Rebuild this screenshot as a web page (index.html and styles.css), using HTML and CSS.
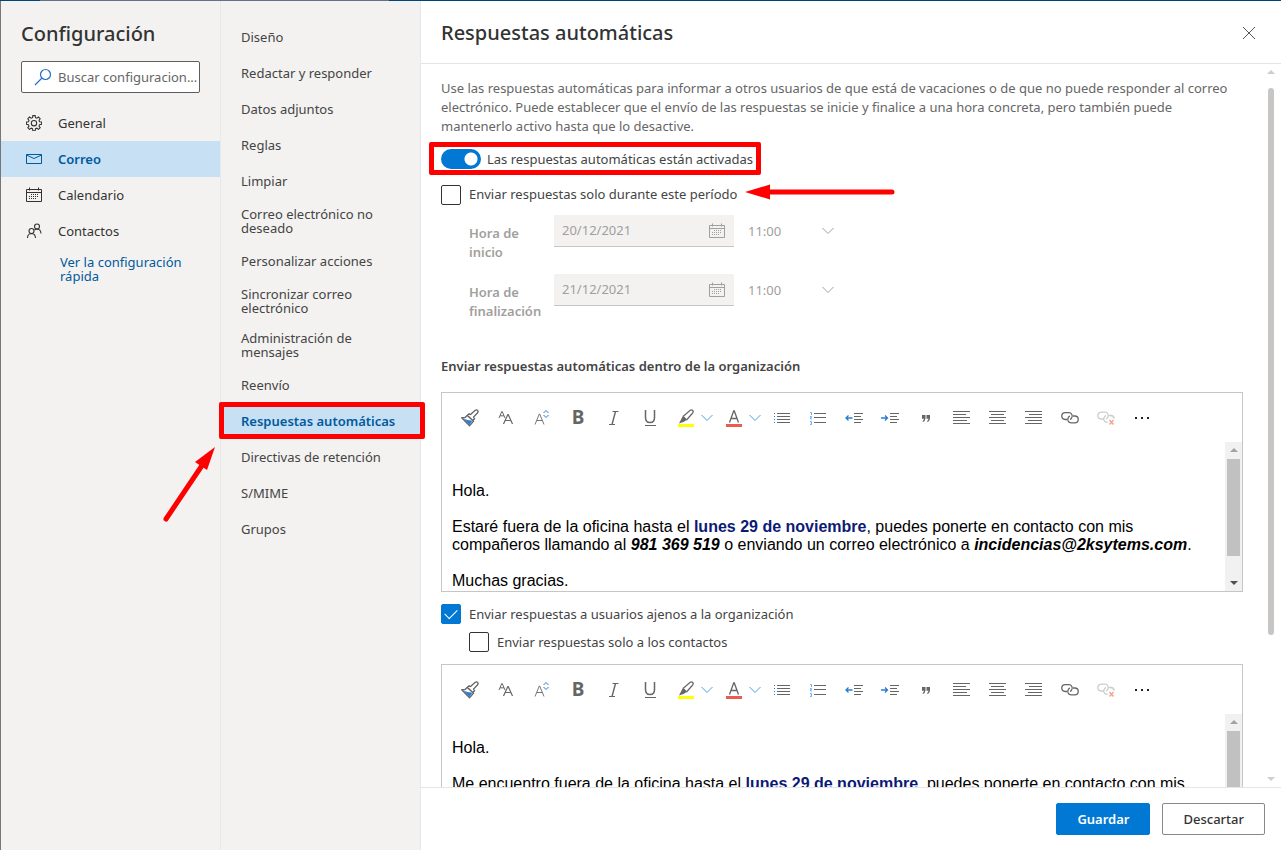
FILE: index.html
```html
<!DOCTYPE html>
<html lang="es">
<head>
<meta charset="utf-8">
<meta name="viewport" content="width=device-width, initial-scale=1">
<title>Configuración</title>
<link rel="stylesheet" href="styles.css">
</head>
<body>
<svg class="sprite" aria-hidden="true">
  <symbol id="i-calendar" viewBox="0 0 16 16">
    <path fill="none" stroke="currentColor" d="M.5 2.500h15v12H.5zM.5 5.500h15M3.500.5v3M12.500.5v3"/>
    <path fill="none" stroke="currentColor" stroke-dasharray="1 1" d="M5 7.500h8M3 9.500h10M3 11.500h8"/>
  </symbol>
  <symbol id="i-chevron" viewBox="0 0 12 8">
    <path fill="none" stroke="currentColor" d="M.5 1 6 6.500 11.500 1"/>
  </symbol>
  <symbol id="i-brush" viewBox="0 0 18 18">
    <path fill="#fff" stroke="#666" stroke-width="1.300" d="M9.500 5.500 14 1.500q1.500-1.200 2.600 0 1 1.200-.2 2.500L12.500 8l1 1.800-2 2-5.200-5.300 1.800-1.800z"/>
    <path fill="#fff" stroke="#666" stroke-width="1.300" d="M6.200 6.500 4 8.500l-3.300.3 7.800 8 4-4.500-1-1z"/>
    <path fill="#2b7cd3" d="M2.500 9.800q4 1.500 8.800 2L8.500 16z"/>
  </symbol>
  <symbol id="i-fontname" viewBox="0 0 16 16">
    <path fill="none" stroke="#666" d="M1 8 3.800 1.500h.4L7 8M2 5.800h4"/>
    <path fill="none" stroke="#666" stroke-width="1.200" d="M5.500 14 9.800 4.500h.4l4.300 9.500M7.200 10.500h5.600"/>
  </symbol>
  <symbol id="i-fontsize" viewBox="0 0 16 18">
    <path fill="none" stroke="#777" d="M1 15.500 5.300 5h.4L10 15.500M2.700 11.500h5.600"/>
    <path fill="none" stroke="#2b7cd3" d="M9.500 4 12 1.500 14.500 4M9.500 6 12 8.500 14.500 6"/>
  </symbol>
  <symbol id="i-italic" viewBox="0 0 16 16">
    <path fill="none" stroke="#666" d="M6.500 1.500h6M3 14.500h6"/>
    <path fill="none" stroke="#666" stroke-width="1.400" d="M9.500 1.500 6 14.500"/>
  </symbol>
  <symbol id="i-underline" viewBox="0 0 16 18">
    <path fill="none" stroke="#666" stroke-width="1.500" d="M3.500 1v7.500q0 5 4.500 5t4.500-5V1"/>
    <path fill="none" stroke="#666" d="M3 16.500h11"/>
  </symbol>
  <symbol id="i-marker" viewBox="0 0 16 18">
    <path fill="#ff0" d="M0 15h16v3H0z"/>
    <path fill="none" stroke="#666" stroke-width="1.200" d="M5 7.500 12.200 1.300q1.400-.9 2.500.2 1 1.200 0 2.500L8.500 11"/>
    <path fill="none" stroke="#666" stroke-width="1.200" d="M5 7.500 8.500 11"/>
    <path fill="#666" d="M4.500 7.500q2.800.8 4 3.500l-3 2L1 14.500z"/>
  </symbol>
  <symbol id="i-color" viewBox="0 0 16 18">
    <path fill="#ea5b52" d="M0 15h16v3H0z"/>
    <path fill="none" stroke="#666" stroke-width="1.300" d="M3.500 13.500 7.700 2h.6l4.200 11.500M5 9.500h6"/>
  </symbol>
  <symbol id="i-bullets" viewBox="0 0 16 16">
    <path fill="none" stroke="#666" d="M3 3.500h13M3 6.500h13M3 9.500h13M3 12.500h13"/>
    <path stroke="#2b7cd3" d="M0 3.500h1M0 6.500h1M0 9.500h1M0 12.500h1"/>
  </symbol>
  <symbol id="i-numbers" viewBox="0 0 16 16">
    <path fill="none" stroke="#666" d="M4 3.500h12M4 7.500h12M4 12.500h12"/>
    <path fill="none" stroke="#79b0ea" d="M0 2.500h1.500V5M0 6.500h1.500v1H.5V9H2M0 11.500h1.500v3H0M.5 13h1"/>
  </symbol>
  <symbol id="i-outdent" viewBox="0 0 18 16">
    <path fill="none" stroke="#666" d="M9 3.500h9M9 6.500h7M9 9.500h9M9 12.500h7"/>
    <path fill="none" stroke="#2b7cd3" stroke-width="1.300" d="M7.500 8H1M3.500 5.500 1 8l2.500 2.500"/>
  </symbol>
  <symbol id="i-indent" viewBox="0 0 18 16">
    <path fill="none" stroke="#666" d="M9 3.500h9M9 6.500h7M9 9.500h9M9 12.500h7"/>
    <path fill="none" stroke="#2b7cd3" stroke-width="1.300" d="M0 8h6.500M4 5.500 6.500 8 4 10.500"/>
  </symbol>
  <symbol id="i-quote" viewBox="0 0 10 16">
    <path fill="#666" d="M1 5h3.500v3.500Q4.300 11 2 12l-.5-.8Q2.900 10.300 3 8.800H1zM5.500 5H9v3.500Q8.800 11 6.500 12L6 11.200Q7.400 10.300 7.500 8.800h-2z"/>
  </symbol>
  <symbol id="i-left" viewBox="0 0 18 16">
    <path fill="none" stroke="#666" d="M0 1.500h17M0 4.500h13M0 7.500h17M0 10.500h14M0 13.500h17"/>
  </symbol>
  <symbol id="i-center" viewBox="0 0 18 16">
    <path fill="none" stroke="#666" d="M0 1.500h17M2 4.500h13M0 7.500h17M2 10.500h13M0 13.500h17"/>
  </symbol>
  <symbol id="i-right" viewBox="0 0 18 16">
    <path fill="none" stroke="#666" d="M0 1.500h17M4 4.500h13M0 7.500h17M3 10.500h14M0 13.500h17"/>
  </symbol>
  <symbol id="i-link" viewBox="0 0 18 14">
    <path fill="none" stroke="#666" stroke-width="1.300" d="M6 8.500H4.200a3.400 3.400 0 0 1 0-6.800h3.600a3.400 3.400 0 0 1 2.800 5.400q-.6.900-1.600 1.200"/>
    <path fill="none" stroke="#666" stroke-width="1.300" d="M12 5h1.800a3.400 3.400 0 0 1 0 6.800h-3.600a3.400 3.400 0 0 1-2.800-5.400q.6-.9 1.600-1.200"/>
  </symbol>
  <symbol id="i-unlink" viewBox="0 0 18 14">
    <path fill="none" stroke="#ccc" stroke-width="1.300" d="M6 8H4.200a3.400 3.400 0 0 1 0-6.800h3.600a3.400 3.400 0 0 1 2.800 5.400q-.6.900-1.600 1.200"/>
    <path fill="none" stroke="#ccc" stroke-width="1.300" d="M12 4.500h1.800q3 .3 3.500 3.200M10.800 11.300h-.6a3.400 3.400 0 0 1-2.800-5.400q.6-.9 1.600-1.200"/>
    <path fill="none" stroke="#efa596" stroke-width="1.500" d="m12.500 9 4 4.500m0-4.500-4 4.500"/>
  </symbol>
  <symbol id="i-more" viewBox="0 0 16 4">
    <path fill="#222" d="M1 1h2v2H1zM7 1h2v2H7zM13 1h2v2h-2z"/>
  </symbol>
</svg>

<div class="app">
  <nav class="sections" aria-label="Configuración">
    <h1 class="title">Configuración</h1>
    <label class="search">
      <svg class="search-icon" width="18" height="18" viewBox="0 0 18 18" aria-hidden="true"><path fill="none" stroke="#2b6cc4" stroke-width="1.200" d="M1 17 7.500 10.500M16.500 6.500a5 5 0 1 1-10 0 5 5 0 0 1 10 0z"/></svg>
      <input class="search-input" type="text" placeholder="Buscar configuracion..." aria-label="Buscar configuraciones">
    </label>
    <a class="section" href="#general">
      <svg class="icon" viewBox="0.5 0 15 15"><path fill="none" stroke="currentColor" d="M6.900.6h2.200l.3 1.900 1.300.5 1.500-1.100 1.600 1.600-1.100 1.500.5 1.300 1.900.3v2.200l-1.900.3-.5 1.300 1.100 1.500-1.600 1.600-1.500-1.100-1.300.5-.3 1.900H6.900l-.3-1.900-1.300-.5-1.500 1.100-1.600-1.600 1.100-1.500-.5-1.300-1.900-.3V6.600l1.900-.3.5-1.300-1.100-1.500 1.600-1.600L5.300 3l1.300-.5z"/><circle cx="8" cy="7.700" r="2.500" fill="none" stroke="currentColor"/></svg>
      General
    </a>
    <a class="section active" href="#correo">
      <svg class="icon" viewBox="0 0 16 16"><path fill="none" stroke="currentColor" d="M.5 3.500h15v9H.5zM.5 4 8 7.500 15.500 4"/></svg>
      Correo
    </a>
    <a class="section" href="#calendario">
      <svg class="icon"><use href="#i-calendar"/></svg>
      Calendario
    </a>
    <a class="section" href="#contactos">
      <svg class="icon" viewBox="0 0 16 16"><g fill="none" stroke="currentColor" stroke-width="1.100"><circle cx="5.500" cy="8" r="2.500"/><path d="M1.500 15q0-4.300 4-4.500 3.800.2 4 4.500"/><circle cx="11" cy="3.500" r="2.500"/><path d="M8.500 7q1-1 2.500-1 3.800.2 4 4.500"/></g></svg>
      Contactos
    </a>
    <a class="quick" href="#rapida">Ver la configuración rápida</a>
  </nav>

  <nav class="pages" aria-label="Correo">
    <a class="page" href="#diseno">Diseño</a>
    <a class="page" href="#redactar">Redactar y responder</a>
    <a class="page" href="#adjuntos">Datos adjuntos</a>
    <a class="page" href="#reglas">Reglas</a>
    <a class="page" href="#limpiar">Limpiar</a>
    <a class="page" href="#junk">Correo electrónico no deseado</a>
    <a class="page" href="#acciones">Personalizar acciones</a>
    <a class="page" href="#sincronizar">Sincronizar correo electrónico</a>
    <a class="page" href="#mensajes">Administración de mensajes</a>
    <a class="page" href="#reenvio">Reenvío</a>
    <a class="page active" href="#respuestas">Respuestas automáticas
      <svg class="arrow-up" width="56" height="78" viewBox="0 0 56 78" aria-hidden="true"><path stroke="#f00" stroke-width="5" stroke-linecap="round" d="M4 74 41 19"/><path fill="#f00" d="M53 2 33 17l12 8z"/></svg>
    </a>
    <a class="page" href="#retencion">Directivas de retención</a>
    <a class="page" href="#smime">S/MIME</a>
    <a class="page" href="#grupos">Grupos</a>
  </nav>

  <main class="panel">
    <header class="panel-head">
      <h2 class="title">Respuestas automáticas</h2>
      <button class="close" type="button" aria-label="Cerrar"><svg width="14" height="14" viewBox="0 0 14 14"><path stroke="#555" d="m1 1 12 12M13 1 1 13"/></svg></button>
    </header>

    <div class="scroller">
      <div class="content">
        <p class="intro">Use las respuestas automáticas para informar a otros usuarios de que está de vacaciones o de que no puede responder al correo electrónico. Puede establecer que el envío de las respuestas se inicie y finalice a una hora concreta, pero también puede mantenerlo activo hasta que lo desactive.</p>

        <label class="option toggle-row">
          <input class="toggle" type="checkbox" role="switch" checked>
          Las respuestas automáticas están activadas
        </label>
        <div class="option-line">
          <label class="option">
            <input class="check" type="checkbox">
            Enviar respuestas solo durante este período
          </label>
          <svg class="arrow-left" width="150" height="16" viewBox="0 0 150 16" aria-hidden="true"><path stroke="#f00" stroke-width="5" stroke-linecap="round" d="M20 8l127 0"/><path fill="#f00" d="M0 8 25 .5v15z"/></svg>
        </div>

        <div class="period">
          <label class="period-label" for="start">Hora de inicio</label>
          <div class="date">
            <input class="date-input" id="start" type="text" value="20/12/2021" disabled>
            <svg class="icon"><use href="#i-calendar"/></svg>
          </div>
          <div class="time">
            <select class="time-select" aria-label="Hora de inicio" disabled><option>11:00</option></select>
            <svg class="chevron"><use href="#i-chevron"/></svg>
          </div>
        </div>
        <div class="period">
          <label class="period-label" for="end">Hora de finalización</label>
          <div class="date">
            <input class="date-input" id="end" type="text" value="21/12/2021" disabled>
            <svg class="icon"><use href="#i-calendar"/></svg>
          </div>
          <div class="time">
            <select class="time-select" aria-label="Hora de finalización" disabled><option>11:00</option></select>
            <svg class="chevron"><use href="#i-chevron"/></svg>
          </div>
        </div>

        <h3 class="subtitle">Enviar respuestas automáticas dentro de la organización</h3>

        <div class="editor">
          <div class="toolbar">
            <button class="tool" type="button" aria-label="Copiar formato"><svg width="18" height="18"><use href="#i-brush"/></svg></button>
            <button class="tool" type="button" aria-label="Fuente"><svg width="16" height="16"><use href="#i-fontname"/></svg></button>
            <button class="tool" type="button" aria-label="Tamaño de fuente"><svg width="16" height="18"><use href="#i-fontsize"/></svg></button>
            <button class="tool bold" type="button" aria-label="Negrita">B</button>
            <button class="tool" type="button" aria-label="Cursiva"><svg width="16" height="16"><use href="#i-italic"/></svg></button>
            <button class="tool" type="button" aria-label="Subrayado"><svg width="16" height="18"><use href="#i-underline"/></svg></button>
            <button class="tool split" type="button" aria-label="Resaltar"><svg width="16" height="18"><use href="#i-marker"/></svg><svg class="chevron"><use href="#i-chevron"/></svg></button>
            <button class="tool split" type="button" aria-label="Color de fuente"><svg width="16" height="18"><use href="#i-color"/></svg><svg class="chevron"><use href="#i-chevron"/></svg></button>
            <button class="tool" type="button" aria-label="Viñetas"><svg width="16" height="16"><use href="#i-bullets"/></svg></button>
            <button class="tool" type="button" aria-label="Numeración"><svg width="16" height="16"><use href="#i-numbers"/></svg></button>
            <button class="tool" type="button" aria-label="Reducir sangría"><svg width="18" height="16"><use href="#i-outdent"/></svg></button>
            <button class="tool" type="button" aria-label="Aumentar sangría"><svg width="18" height="16"><use href="#i-indent"/></svg></button>
            <button class="tool" type="button" aria-label="Cita"><svg width="10" height="16"><use href="#i-quote"/></svg></button>
            <button class="tool" type="button" aria-label="Alinear a la izquierda"><svg width="18" height="16"><use href="#i-left"/></svg></button>
            <button class="tool" type="button" aria-label="Centrar"><svg width="18" height="16"><use href="#i-center"/></svg></button>
            <button class="tool" type="button" aria-label="Alinear a la derecha"><svg width="18" height="16"><use href="#i-right"/></svg></button>
            <button class="tool" type="button" aria-label="Insertar vínculo"><svg width="18" height="14"><use href="#i-link"/></svg></button>
            <button class="tool" type="button" aria-label="Quitar vínculo" disabled><svg width="18" height="14"><use href="#i-unlink"/></svg></button>
            <button class="tool" type="button" aria-label="Más"><svg width="16" height="4"><use href="#i-more"/></svg></button>
          </div>
          <div class="editor-body">
            <div class="message" contenteditable="true" role="textbox" aria-label="Respuesta dentro de la organización">
              <p class="blank"></p>
              <p>Hola.</p>
              <p>Estaré fuera de la oficina hasta el <b class="when">lunes 29 de noviembre</b>, puedes ponerte en contacto con mis compañeros llamando al <b><i>981 369 519</i></b> o enviando un correo electrónico a <b><i>incidencias@2ksytems.com</i></b>.</p>
              <p>Muchas gracias.</p>
            </div>
            <div class="bar">
              <span class="bar-up"></span>
              <span class="bar-thumb"></span>
              <span class="bar-down"></span>
            </div>
          </div>
        </div>

        <label class="option outside">
          <input class="check" type="checkbox" checked>
          Enviar respuestas a usuarios ajenos a la organización
        </label>
        <label class="option contacts">
          <input class="check" type="checkbox">
          Enviar respuestas solo a los contactos
        </label>

        <div class="editor">
          <div class="toolbar">
            <button class="tool" type="button" aria-label="Copiar formato"><svg width="18" height="18"><use href="#i-brush"/></svg></button>
            <button class="tool" type="button" aria-label="Fuente"><svg width="16" height="16"><use href="#i-fontname"/></svg></button>
            <button class="tool" type="button" aria-label="Tamaño de fuente"><svg width="16" height="18"><use href="#i-fontsize"/></svg></button>
            <button class="tool bold" type="button" aria-label="Negrita">B</button>
            <button class="tool" type="button" aria-label="Cursiva"><svg width="16" height="16"><use href="#i-italic"/></svg></button>
            <button class="tool" type="button" aria-label="Subrayado"><svg width="16" height="18"><use href="#i-underline"/></svg></button>
            <button class="tool split" type="button" aria-label="Resaltar"><svg width="16" height="18"><use href="#i-marker"/></svg><svg class="chevron"><use href="#i-chevron"/></svg></button>
            <button class="tool split" type="button" aria-label="Color de fuente"><svg width="16" height="18"><use href="#i-color"/></svg><svg class="chevron"><use href="#i-chevron"/></svg></button>
            <button class="tool" type="button" aria-label="Viñetas"><svg width="16" height="16"><use href="#i-bullets"/></svg></button>
            <button class="tool" type="button" aria-label="Numeración"><svg width="16" height="16"><use href="#i-numbers"/></svg></button>
            <button class="tool" type="button" aria-label="Reducir sangría"><svg width="18" height="16"><use href="#i-outdent"/></svg></button>
            <button class="tool" type="button" aria-label="Aumentar sangría"><svg width="18" height="16"><use href="#i-indent"/></svg></button>
            <button class="tool" type="button" aria-label="Cita"><svg width="10" height="16"><use href="#i-quote"/></svg></button>
            <button class="tool" type="button" aria-label="Alinear a la izquierda"><svg width="18" height="16"><use href="#i-left"/></svg></button>
            <button class="tool" type="button" aria-label="Centrar"><svg width="18" height="16"><use href="#i-center"/></svg></button>
            <button class="tool" type="button" aria-label="Alinear a la derecha"><svg width="18" height="16"><use href="#i-right"/></svg></button>
            <button class="tool" type="button" aria-label="Insertar vínculo"><svg width="18" height="14"><use href="#i-link"/></svg></button>
            <button class="tool" type="button" aria-label="Quitar vínculo" disabled><svg width="18" height="14"><use href="#i-unlink"/></svg></button>
            <button class="tool" type="button" aria-label="Más"><svg width="16" height="4"><use href="#i-more"/></svg></button>
          </div>
          <div class="editor-body">
            <div class="message" contenteditable="true" role="textbox" aria-label="Respuesta fuera de la organización">
              <p>Hola.</p>
              <p>Me encuentro fuera de la oficina hasta el <b class="when">lunes 29 de noviembre</b>, puedes ponerte en contacto con mis</p>
            </div>
            <div class="bar">
              <span class="bar-up"></span>
              <span class="bar-thumb"></span>
              <span class="bar-down"></span>
            </div>
          </div>
        </div>
      </div>

      <div class="panel-bar">
        <span class="bar-up"></span>
        <span class="bar-thumb"></span>
        <span class="bar-down"></span>
      </div>
    </div>

    <footer class="panel-foot">
      <button class="btn primary" type="button">Guardar</button>
      <button class="btn" type="button">Descartar</button>
    </footer>
  </main>
</div>
</body>
</html>
```
FILE: styles.css
```css
* {
  box-sizing: border-box;
}
body {
  margin: 0;
  font-family: "Noto Sans", "Open Sans", sans-serif;
  font-size: 13px;
  line-height: 19px;
  color: #444;
}
h1, h2, h3, p {
  margin: 0;
}
a {
  text-decoration: none;
}
button, input, select {
  font: inherit;
  color: inherit;
}
.sprite {
  display: none;
}
.app {
  display: grid;
  grid-template-columns: 220px 200px 1fr;
  height: 100vh;
  overflow: hidden;
  padding: 1px 0 0 1px;
  background: linear-gradient(90deg, #004578 40px, #60738a 40px, #60738a 389px, #004578 389px) top / 100% 1px no-repeat, #777;
}
.title {
  font-size: 20px;
  line-height: 28px;
  font-weight: 500;
  color: #333;
}
.icon {
  width: 16px;
  height: 16px;
  flex: none;
}
.chevron {
  width: 12px;
  height: 8px;
  flex: none;
}

/* left column */
.sections {
  background: #f3f2f1;
  border-right: 1px solid #e8e8e8;
}
.sections .title {
  padding: 19px 20px 13px;
}
.search {
  display: flex;
  align-items: center;
  gap: 6px;
  height: 32px;
  margin: 0 20px 12px;
  padding-left: 12px;
  background: #fff;
  border: 1px solid #605e5c;
  border-radius: 2px;
}
.search-icon {
  flex: none;
}
.search-input {
  flex: 1;
  min-width: 0;
  padding: 0;
  border: 0;
  outline: 0;
  background: none;
}
.search-input::placeholder {
  color: #666;
}
.section {
  display: flex;
  align-items: center;
  gap: 16px;
  height: 36px;
  padding-left: 25px;
  color: #333;
}
.section.active, .page.active {
  background: #c7e0f4;
  color: #005a9e;
  font-weight: 600;
}
.quick {
  display: block;
  padding: 6px 20px 0 59px;
  line-height: 14px;
  color: #005a9e;
}

/* second column */
.pages {
  padding-top: 18px;
  background: #f3f2f1;
  border-right: 1px solid #e8e8e8;
}
.page {
  display: flex;
  align-items: center;
  min-height: 36px;
  padding: 8px 20px;
  line-height: 14px;
  color: #444;
}
.page.active {
  position: relative;
  white-space: nowrap;
}
.page.active::after {
  content: "";
  position: absolute;
  z-index: 2;
  inset: -1px -5px 0 -2px;
  border: 5px solid #f00;
  border-radius: 2px;
}
.arrow-up {
  position: absolute;
  left: -59px;
  top: 42px;
}

/* main panel */
.panel {
  display: flex;
  flex-direction: column;
  min-width: 0;
  min-height: 0;
  background: #fff;
}
.panel-head {
  display: flex;
  align-items: center;
  justify-content: space-between;
  height: 63px;
  flex: none;
  padding: 1px 19px 0 20px;
  border-bottom: 1px solid #e5e5e5;
}
.close {
  display: flex;
  padding: 6px;
  border: 0;
  background: none;
}
.scroller {
  display: flex;
  flex: 1;
  min-height: 0;
}
.content {
  flex: 1;
  min-width: 0;
  overflow: hidden;
  padding: 15px 21px 0 20px;
}
.intro {
  margin-bottom: 13px;
  color: #666;
}
.option {
  display: flex;
  align-items: center;
  gap: 8px;
  height: 20px;
}
.toggle-row {
  position: relative;
  width: max-content;
  gap: 6px;
  margin-bottom: 15px;
}
.toggle-row::after {
  content: "";
  position: absolute;
  inset: -7px -8px -6px -12px;
  border: 5px solid #f00;
  border-radius: 2px;
}
.toggle {
  appearance: none;
  width: 40px;
  height: 20px;
  flex: none;
  margin: 0;
  border-radius: 10px;
  background: radial-gradient(circle at 30px 10px, #fff 6px, #0078d4 7px);
}
.check {
  appearance: none;
  display: grid;
  place-items: center;
  width: 20px;
  height: 20px;
  flex: none;
  margin: 0;
  border: 1px solid #333;
  border-radius: 2px;
  background: #fff;
}
.check:checked {
  background: #0078d4;
  border-color: #0078d4;
}
.check:checked::before {
  content: "";
  width: 11px;
  height: 6px;
  margin-bottom: 4px;
  border: solid #fff;
  border-width: 0 0 1px 1px;
  transform: rotate(-45deg);
}
.option-line {
  display: flex;
  align-items: center;
  gap: 8px;
  margin-bottom: 10px;
}
.arrow-left {
  margin-bottom: 5px;
}
.period {
  display: flex;
  align-items: flex-start;
  height: 59px;
  padding-left: 28px;
  color: #a19f9d;
}
.period-label {
  width: 85px;
  flex: none;
  padding: 9px 8px 0 0;
  font-weight: 600;
}
.date {
  display: flex;
  align-items: center;
  width: 180px;
  height: 32px;
  padding: 0 9px 0 8px;
  background: #f3f2f1;
  border-bottom: 1px solid #c8c6c4;
}
.date-input {
  flex: 1;
  min-width: 0;
  padding: 0;
  border: 0;
  background: none;
  color: #a19f9d;
}
.time {
  display: flex;
  align-items: center;
  width: 107px;
  height: 32px;
  padding: 0 7px 0 14px;
}
.time-select {
  appearance: none;
  flex: 1;
  min-width: 0;
  padding: 0;
  border: 0;
  background: none;
  color: #a19f9d;
  opacity: 1;
}
.subtitle {
  margin: 24px 0 16px;
  font-size: 13px;
  font-weight: 600;
  color: #444;
}

/* rich text editor */
.editor {
  height: 200px;
  display: flex;
  flex-direction: column;
  border: 1px solid #c8c6c4;
}
.toolbar {
  display: flex;
  height: 49px;
  flex: none;
  padding-left: 10px;
}
.tool {
  display: flex;
  align-items: center;
  justify-content: center;
  width: 36px;
  flex: none;
  padding: 0;
  border: 0;
  background: none;
  color: #666;
}
.tool.bold {
  font-size: 19px;
  font-weight: 700;
}
.tool.split {
  width: 48px;
  gap: 7px;
  padding-left: 6px;
}
.tool .chevron {
  color: #4ba0e8;
}
.editor-body {
  display: flex;
  flex: 1;
  min-height: 0;
}
.message {
  flex: 1;
  min-width: 0;
  overflow: hidden;
  padding: 25px 10px 0;
  outline: 0;
  font-family: "Liberation Sans", Arial, sans-serif;
  font-size: 16px;
  line-height: 18px;
  color: #000;
}
.message p {
  margin-bottom: 18px;
}
.message .blank {
  height: 15px;
  margin: 0;
}
.when {
  color: #0c1a76;
}
.bar {
  display: flex;
  flex-direction: column;
  align-items: center;
  width: 17px;
  flex: none;
  padding: 6px 0;
  background: #f1f1f1;
}
.bar-up, .bar-down {
  border: 4px solid transparent;
}
.bar-up {
  border-top: 0;
  border-bottom-color: #a3a3a3;
}
.bar-down {
  border-bottom: 0;
  border-top-color: #505050;
  margin-top: auto;
}
.bar .bar-thumb {
  width: 13px;
  height: 71%;
  margin-top: 7px;
  background: #c1c1c1;
}
.panel-bar {
  display: flex;
  flex-direction: column;
  align-items: center;
  width: 14px;
  flex: none;
  padding: 6px 0;
  margin-right: 3px;
}
.panel-bar .bar-up {
  border-bottom-color: #c8d0d4;
}
.panel-bar .bar-down {
  border-top-color: #c8d0d4;
}
.panel-bar .bar-thumb {
  width: 6px;
  height: 77%;
  margin-top: 14px;
  border-radius: 3px;
  background: #c8c6c4;
}
.outside {
  margin-top: 12px;
}
.contacts {
  margin: 8px 0 12px 28px;
}

/* buttons at the bottom */
.panel-foot {
  display: flex;
  justify-content: flex-end;
  gap: 12px;
  height: 63px;
  flex: none;
  padding: 15px 16px 0;
  border-top: 1px solid #e5e5e5;
}
.btn {
  height: 32px;
  padding: 0 20px;
  border: 1px solid #8a8886;
  border-radius: 2px;
  background: #fff;
  font-weight: 500;
  color: #333;
}
.btn.primary {
  border-color: #0078d4;
  background: #0078d4;
  font-weight: 600;
  color: #fff;
}
```
